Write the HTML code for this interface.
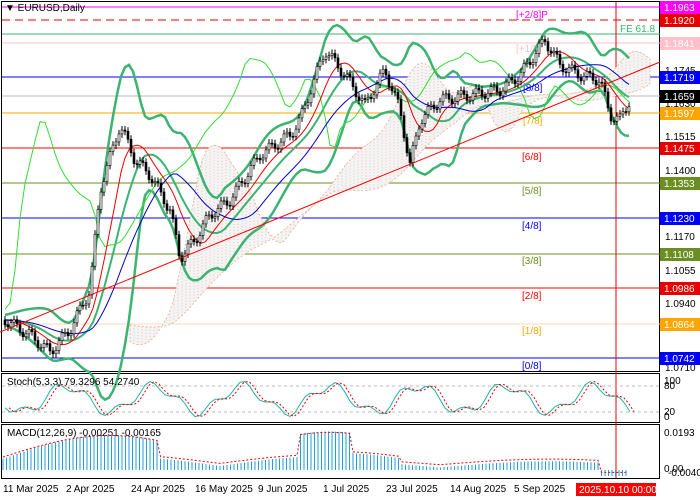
<!DOCTYPE html>
<html><head><meta charset="utf-8"><style>
body{margin:0;background:#fff;}
svg{display:block;font-family:"Liberation Sans",sans-serif;}
</style></head><body>
<svg id="s" width="700" height="500" xmlns="http://www.w3.org/2000/svg">
<rect width="700" height="500" fill="#fff"/>
<rect x="1.5" y="1.5" width="658" height="370" fill="none" stroke="#000"/>
<rect x="1.5" y="373.5" width="658" height="49" fill="none" stroke="#000"/>
<rect x="1.5" y="424.5" width="658" height="54" fill="none" stroke="#000"/>
<g stroke-width="1">
<line x1="2" x2="660" y1="7" y2="7" stroke="#ff00ff"/>
<line x1="2" x2="660" y1="20" y2="20" stroke="#e00" stroke-dasharray="8,5"/>
<line x1="2" x2="660" y1="34" y2="34" stroke="#3cb371"/>
<line x1="2" x2="660" y1="43" y2="43" stroke="#ffc0cb"/>
<line x1="2" x2="660" y1="77" y2="77" stroke="#0000ff"/>
<line x1="2" x2="660" y1="96" y2="96" stroke="#bbb"/>
<line x1="2" x2="660" y1="113" y2="113" stroke="#ffa500"/>
<line x1="2" x2="660" y1="148" y2="148" stroke="#ff0000"/>
<line x1="2" x2="660" y1="183" y2="183" stroke="#6b8e23"/>
<line x1="2" x2="660" y1="218" y2="218" stroke="#0000ff"/>
<line x1="2" x2="660" y1="254" y2="254" stroke="#6b8e23"/>
<line x1="2" x2="660" y1="288" y2="288" stroke="#ff0000"/>
<line x1="2" x2="660" y1="324" y2="324" stroke="#ffdab9"/>
<line x1="2" x2="660" y1="358" y2="358" stroke="#0000ff"/>
</g>
<g font-size="10">
<text x="516" y="18" fill="#ff00ff">[+2/8]P</text>
<text x="516" y="52" fill="#ffc0cb">[+1/8]</text>
<text x="523" y="91" fill="#00f">[8/8]</text>
<text x="523" y="124" fill="#ffa500">[7/8]</text>
<text x="522" y="160" fill="#f00">[6/8]</text>
<text x="522" y="194" fill="#6b8e23">[5/8]</text>
<text x="522" y="229" fill="#00f">[4/8]</text>
<text x="522" y="264" fill="#6b8e23">[3/8]</text>
<text x="522" y="299" fill="#f00">[2/8]</text>
<text x="522" y="334" fill="#ffa500">[1/8]</text>
<text x="522" y="369" fill="#00f">[0/8]</text>
<text x="620" y="32" fill="#3cb371">FE 61.8</text>
</g>
<line x1="616" x2="616" y1="2" y2="478" stroke="#e00"/>
<g id="chart"></g>
<line x1="0" y1="332" x2="660" y2="62" stroke="#f00"/>
<g font-size="10" fill="#000">
<text x="665" y="74">1.1745</text><text x="665" y="107">1.1630</text>
<text x="665" y="140">1.1515</text><text x="665" y="174">1.1400</text>
<text x="665" y="240">1.1170</text><text x="665" y="274">1.1055</text>
<text x="665" y="307">1.0940</text><text x="665" y="371">1.0710</text>
</g>
<g font-size="10">
<rect x="660" y="1" width="40" height="13" fill="#ff00ff"/><text x="664" y="11" fill="#fff">1.1963</text>
<rect x="660" y="14" width="40" height="13" fill="#e60000"/><text x="664" y="24" fill="#fff">1.1920</text>
<rect x="660" y="37" width="40" height="13" fill="#ffc0cb"/><text x="664" y="47" fill="#fff">1.1841</text>
<rect x="660" y="71" width="40" height="13" fill="#0000ff"/><text x="664" y="81" fill="#fff">1.1719</text>
<rect x="660" y="90" width="40" height="13" fill="#000"/><text x="664" y="100" fill="#fff">1.1659</text>
<rect x="660" y="107" width="40" height="13" fill="#ffa500"/><text x="664" y="117" fill="#fff">1.1597</text>
<rect x="660" y="142" width="40" height="13" fill="#e60000"/><text x="664" y="152" fill="#fff">1.1475</text>
<rect x="660" y="177" width="40" height="13" fill="#6b8e23"/><text x="664" y="187" fill="#fff">1.1353</text>
<rect x="660" y="212" width="40" height="13" fill="#0000ff"/><text x="664" y="222" fill="#fff">1.1230</text>
<rect x="660" y="248" width="40" height="13" fill="#6b8e23"/><text x="664" y="258" fill="#fff">1.1108</text>
<rect x="660" y="282" width="40" height="13" fill="#e60000"/><text x="664" y="292" fill="#fff">1.0986</text>
<rect x="660" y="318" width="40" height="13" fill="#ffa500"/><text x="664" y="328" fill="#fff">1.0864</text>
<rect x="660" y="352" width="40" height="13" fill="#0000ff"/><text x="664" y="362" fill="#fff">1.0742</text>
</g>
<g font-size="10">
<text x="5" y="11" fill="#000">▼ EURUSD,Daily</text>
<text x="7" y="385">Stoch(5,3,3) 79.3296 54.2740</text>
<text x="7" y="436">MACD(12,26,9) -0.00251 -0.00165</text>
<text x="664" y="384">100</text><text x="664" y="389">80</text><text x="664" y="415">20</text><text x="664" y="420">0</text>
<text x="664" y="436">0.0193</text><text x="664" y="472">0.00</text><text x="668" y="476">-0.00406</text>
</g>
<line x1="2" x2="660" y1="386" y2="386" stroke="#bbb" stroke-dasharray="3,3"/>
<line x1="2" x2="660" y1="412" y2="412" stroke="#bbb" stroke-dasharray="3,3"/>
<g id="ind"></g>
<g font-size="10" fill="#000">
<text x="3" y="492">11 Mar 2025</text><text x="66" y="492">2 Apr 2025</text>
<text x="131" y="492">24 Apr 2025</text><text x="195" y="492">16 May 2025</text>
<text x="258" y="492">9 Jun 2025</text><text x="323" y="492">1 Jul 2025</text>
<text x="386" y="492">23 Jul 2025</text><text x="450" y="492">14 Aug 2025</text>
<text x="514" y="492">5 Sep 2025</text>
<rect x="576" y="483" width="80" height="13" fill="#f00"/><text x="579" y="493" fill="#fff">2025.10.10 00:00</text>
</g>
</svg>
<script>
var NS="http://www.w3.org/2000/svg";
function el(p,t,a){var e=document.createElementNS(NS,t);for(var k in a)e.setAttribute(k,a[k]);p.appendChild(e);return e;}
var key=[[-80,320],[5,320],[30,335],[50,352],[70,330],[90,290],[100,190],[120,125],[135,160],[150,175],[170,210],[180,258],[195,240],[210,215],[230,200],[260,155],[290,135],[300,120],[325,50],[345,75],[365,105],[385,70],[400,110],[410,165],[420,120],[440,100],[470,95],[500,90],[520,75],[545,40],[560,65],[580,75],[600,80],[610,115],[620,120],[632,95]];
function py(x){if(x<key[0][0])return 320;for(var i=1;i<key.length;i++){if(x<=key[i][0]){var a=key[i-1],b=key[i];return a[1]+(b[1]-a[1])*(x-a[0])/(b[0]-a[0]);}}return 95;}
var g=document.getElementById("chart");
function ma(x,w){var s=0,n=0;for(var k=0;k<=w;k+=3){s+=py(x-k);n++;}return s/n;}
function sd(x,w){var m=ma(x,w),s=0,n=0;for(var k=0;k<=w;k+=3){s+=(py(x-k)-m)*(py(x-k)-m);n++;}return Math.sqrt(s/n);}
var up=[],dn=[];for(var x=130;x<=650;x+=4){var a=ma(x-78,27),b=ma(x-78,156);up.push([x,Math.min(a,b)]);dn.push([x,Math.max(a,b)]);}
var cl="";up.forEach(function(p,i){cl+=(i?"L":"M")+p[0]+" "+p[1];});for(var i=dn.length-1;i>=0;i--)cl+="L"+dn[i][0]+" "+dn[i][1];
el(g,"path",{d:cl+"Z",fill:"#f6f3f3",stroke:"#e8b090","stroke-dasharray":"2,2","stroke-width":0.8});
for(var i=0;i<up.length;i++)el(g,"line",{x1:up[i][0],x2:up[i][0],y1:up[i][1],y2:dn[i][1],stroke:"#c8b8b8","stroke-dasharray":"1,2","stroke-width":0.7});
var bu="",bl="",bm="";for(var x=5;x<=630;x+=4){var m=ma(x,45),s=sd(x,45)*2+5;bu+=(x==5?"M":"L")+x+" "+(m-s);bl+=(x==5?"M":"L")+x+" "+(m+s);bm+=(x==5?"M":"L")+x+" "+m;}
el(g,"path",{d:bu,fill:"none",stroke:"#3cb371","stroke-width":2.5});el(g,"path",{d:bl,fill:"none",stroke:"#3cb371","stroke-width":2.5});el(g,"path",{d:bm,fill:"none",stroke:"#3cb371","stroke-width":2});
var d="";for(var x=5;x<=630;x+=5){d+=(x==5?"M":"L")+x+" "+(py(x+78)+10*Math.sin(x/9));}el(g,"path",{d:d,fill:"none",stroke:"#33dd33","stroke-width":1});
d="";for(var x=5;x<=630;x+=4){d+=(x==5?"M":"L")+x+" "+ma(x,27);}el(g,"path",{d:d,fill:"none",stroke:"#e00","stroke-width":1});
d="";for(var x=5;x<=630;x+=4){d+=(x==5?"M":"L")+x+" "+ma(x,78);}el(g,"path",{d:d,fill:"none",stroke:"#00c","stroke-width":1});
var prev=py(3);
for(var x=5;x<=630;x+=3){var c=py(x)+6*Math.sin(x*1.7);var o=prev;var hi=Math.min(o,c)-4,lo=Math.max(o,c)+4;
el(g,"line",{x1:x,x2:x,y1:hi,y2:lo,stroke:"#000"});
el(g,"rect",{x:x-1,y:Math.min(o,c),width:2,height:Math.max(1,Math.abs(c-o)),fill:c<o?"#fff":"#000",stroke:"#000","stroke-width":0.6});prev=c;}
var ig=document.getElementById("ind");var s1="",s2="";
for(var x=5;x<=630;x+=5){var v=399+13*Math.sin(x/14)+5*Math.sin(x/5);s1+=(x==5?"M":"L")+x+" "+v;s2+=(x==5?"M":"L")+(x+4)+" "+v;}
el(ig,"path",{d:s1,fill:"none",stroke:"#20b2aa"});el(ig,"path",{d:s2,fill:"none",stroke:"#e00","stroke-dasharray":"2,2"});
var sig="";for(var x=3;x<=626;x+=3.5){var v=(x<160?1:x<300?0.4:x<350?1.1:x<400?0.5:0.25)*(10+25*Math.abs(Math.sin(x/70)));if(x>600)v=-6;
el(ig,"line",{x1:x,x2:x,y1:470,y2:470-v,stroke:"#1e9fdc","stroke-width":1});sig+=(x==3?"M":"L")+x+" "+(470-v*0.9-3);}
el(ig,"path",{d:sig,fill:"none",stroke:"#e00","stroke-dasharray":"2,2"});
</script>
</body></html>
